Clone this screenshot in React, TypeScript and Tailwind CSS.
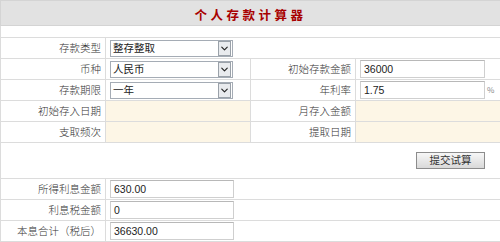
import { ChevronDown } from 'lucide-react';

const font = "font-['SimSun','Noto_Sans_CJK_SC',sans-serif]";

const Select = ({ value }: { value: string }) => (
  <div className="flex items-center w-[123px] h-[17px] border border-[#a5acb5] bg-white">
    <span className="flex-1 pl-[2px] text-[10.5px] leading-none text-[#222]">{value}</span>
    <span className="flex items-center justify-center w-[13px] h-[15px] mr-[1px] border border-[#9aa1a9] bg-[#e9ebee]">
      <ChevronDown size={11} strokeWidth={2.5} className="text-[#222]" />
    </span>
  </div>
);

const Input = ({ value, w = 'w-[125px]' }: { value: string; w?: string }) => (
  <div className={`${w} h-[18px] border border-[#cfcfcf] border-t-[#b8b8b8] bg-white pl-[3px] text-[10.5px] leading-[16px] text-[#222] font-['Liberation_Sans','Noto_Sans_CJK_SC',sans-serif]`}>
    {value}
  </div>
);

const Label = ({ children }: { children: React.ReactNode }) => (
  <td className="border border-[#dcdcdc] pr-[4px] text-right text-[10.5px] font-light text-[#333] h-[21px]">{children}</td>
);

const Cell = ({ children, cream, span }: { children?: React.ReactNode; cream?: boolean; span?: number }) => (
  <td colSpan={span} className={`border border-[#dcdcdc] pl-[4px] h-[21px] ${cream ? 'bg-[#fdf6e6]' : 'bg-white'}`}>
    {children}
  </td>
);

export default function App() {
  return (
    <div className={`w-[500px] h-[242px] bg-white ${font}`}>
      <table className="w-[500px] table-fixed border-collapse border border-[#cfcfcf]">
        <colgroup>
          <col className="w-[105px]" />
          <col className="w-[145px]" />
          <col className="w-[105px]" />
          <col className="w-[145px]" />
        </colgroup>
        <tbody>
          <tr>
            <td colSpan={4} className="h-[22px] bg-[#e2e2e2] border border-[#d4d4d4] text-center">
              <span className="text-[12.5px] font-bold text-[#a80000] tracking-[3.5px] leading-none">个人存款计算器</span>
            </td>
          </tr>
          <tr>
            <td colSpan={4} className="h-[12px] border border-[#dcdcdc]" />
          </tr>
          <tr>
            <Label>存款类型</Label>
            <Cell span={3}><Select value="整存整取" /></Cell>
          </tr>
          <tr>
            <Label>币种</Label>
            <Cell><Select value="人民币" /></Cell>
            <Label>初始存款金额</Label>
            <Cell><Input value="36000" /></Cell>
          </tr>
          <tr>
            <Label>存款期限</Label>
            <Cell><Select value="一年" /></Cell>
            <Label>年利率</Label>
            <Cell>
              <div className="flex items-center gap-[2px]">
                <Input value="1.75" />
                <span className="text-[8px] text-[#888]">%</span>
              </div>
            </Cell>
          </tr>
          <tr>
            <Label>初始存入日期</Label>
            <Cell cream />
            <Label>月存入金额</Label>
            <Cell cream />
          </tr>
          <tr>
            <Label>支取频次</Label>
            <Cell cream />
            <Label>提取日期</Label>
            <Cell cream />
          </tr>
          <tr>
            <td colSpan={4} className="h-[36px] border border-[#dcdcdc] pr-[15px]">
              <div className="flex justify-end">
                <button className="w-[69px] h-[17px] border border-[#8c8c8c] bg-gradient-to-b from-[#f7f7f7] to-[#d9d9d9] text-[10.5px] leading-none text-[#333]">
                  提交试算
                </button>
              </div>
            </td>
          </tr>
          <tr>
            <Label>所得利息金额</Label>
            <Cell span={3}><Input value="630.00" w="w-[124px]" /></Cell>
          </tr>
          <tr>
            <Label>利息税金额</Label>
            <Cell span={3}><Input value="0" w="w-[124px]" /></Cell>
          </tr>
          <tr>
            <Label>本息合计（税后）</Label>
            <Cell span={3}><Input value="36630.00" w="w-[124px]" /></Cell>
          </tr>
        </tbody>
      </table>
    </div>
  );
}
